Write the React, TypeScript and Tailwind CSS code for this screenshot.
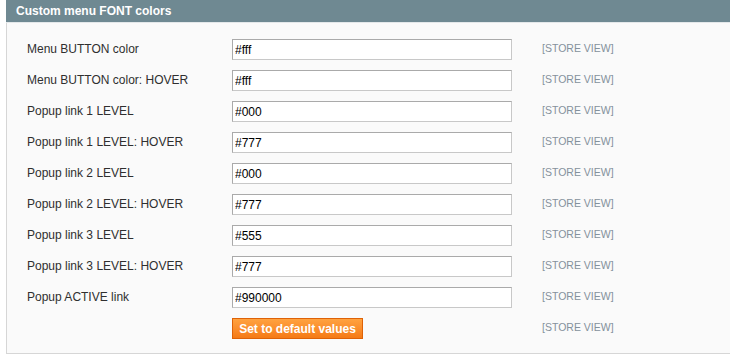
import React from "react";

const rows: [string, string][] = [
  ["Menu BUTTON color", "#fff"],
  ["Menu BUTTON color: HOVER", "#fff"],
  ["Popup link 1 LEVEL", "#000"],
  ["Popup link 1 LEVEL: HOVER", "#777"],
  ["Popup link 2 LEVEL", "#000"],
  ["Popup link 2 LEVEL: HOVER", "#777"],
  ["Popup link 3 LEVEL", "#555"],
  ["Popup link 3 LEVEL: HOVER", "#777"],
  ["Popup ACTIVE link", "#990000"],
];

export default function App() {
  return (
    <div
      className="w-[730px] h-[362px] bg-white overflow-hidden"
      style={{ fontFamily: '"Liberation Sans", Arial, sans-serif' }}
    >
      <div className="ml-[6px] w-[740px]">
        <div className="h-[22px] bg-[#6f8992] pl-[10px] flex items-center text-[12px] font-bold text-white leading-none">
          Custom menu FONT colors
        </div>
        <div className="h-px bg-[#e4e8ea]" />
        <div className="bg-[#fafafa] border-l border-b border-[#d6d6d6] pt-[11px] pb-[9px] pl-[20px]">
          {rows.map(([label, value]) => (
            <div key={label} className="h-[31px] flex items-center">
              <div className="w-[205px] text-[12px] leading-[14px] pb-px text-[#2f2f2f]">{label}</div>
              <input
                readOnly
                value={value}
                className="w-[280px] h-[21px] bg-white border border-[#c8c8c8] border-t-[#aaaaaa] border-l-[#aaaaaa] pl-[2px] text-[12px] text-black outline-none"
                style={{ fontFamily: '"Liberation Sans", Arial, sans-serif' }}
              />
              <div className="ml-[30px] text-[10.5px] leading-[13px] pb-[2px] text-[#84919c]">[STORE VIEW]</div>
            </div>
          ))}
          <div className="h-[31px] flex items-center">
            <div className="w-[205px]" />
            <div className="w-[280px]">
              <button className="h-[21px] w-[131px] border border-[#de6207] bg-gradient-to-b from-[#ffa23f] to-[#f57a14] text-white text-[12px] font-bold leading-none flex items-center justify-center">
                Set to default values
              </button>
            </div>
            <div className="ml-[30px] text-[10.5px] leading-[13px] pb-[2px] text-[#84919c]">[STORE VIEW]</div>
          </div>
        </div>
      </div>
    </div>
  );
}
